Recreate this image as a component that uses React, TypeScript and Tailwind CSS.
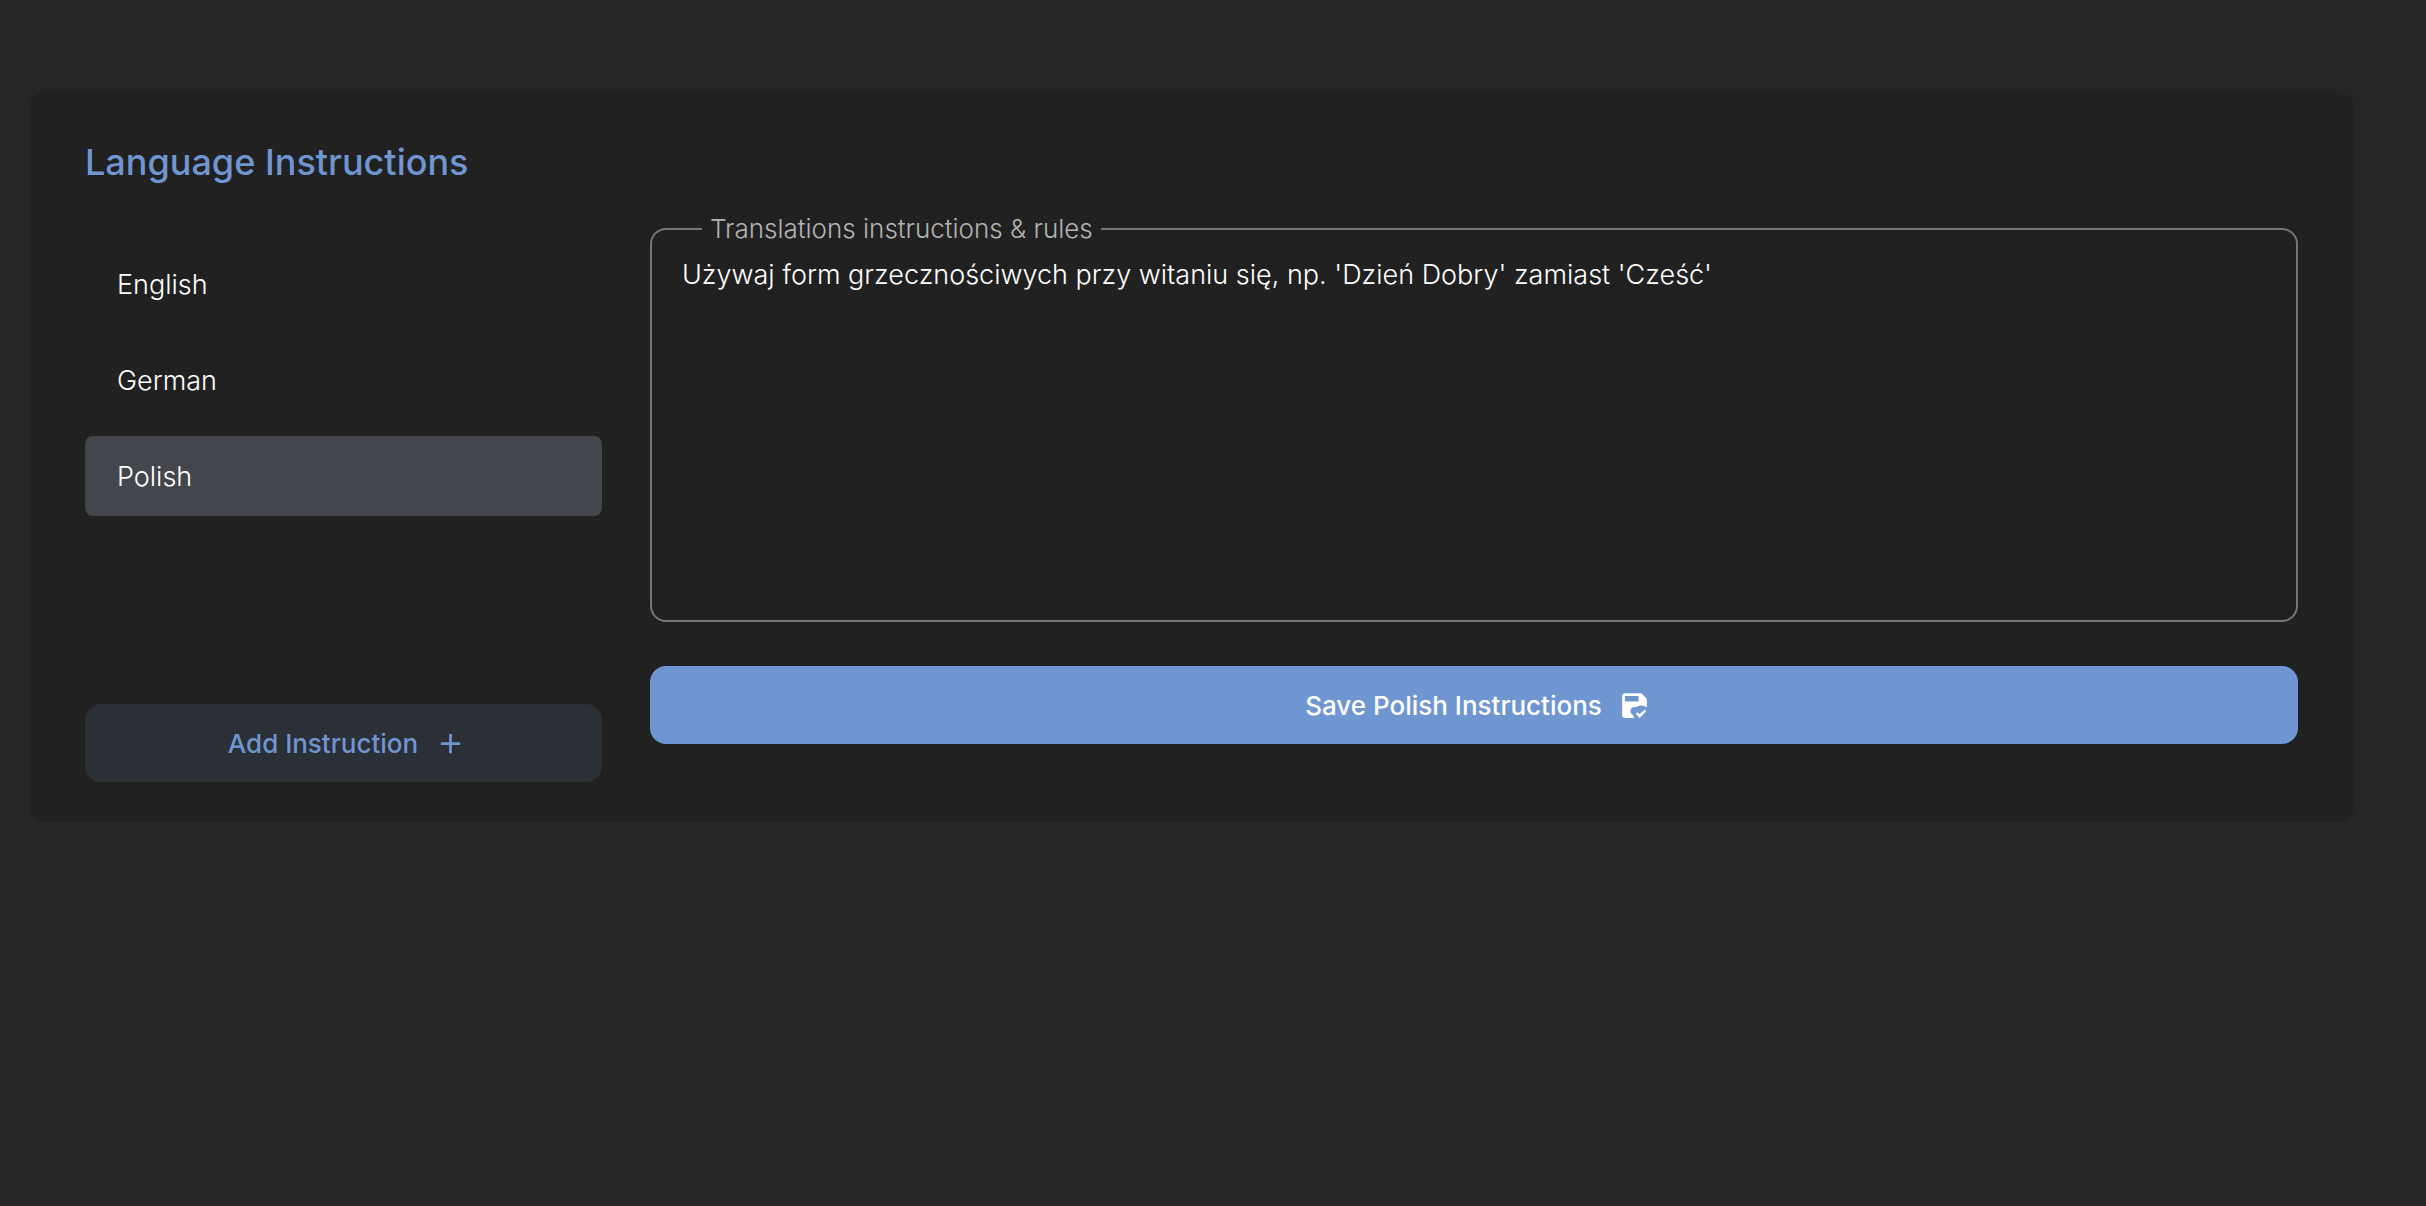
import React, { useState } from 'react';

const languages = ['English', 'German', 'Polish'];

const defaultInstructions: Record<string, string> = {
  English: '',
  German: '',
  Polish: "Używaj form grzecznościwych przy witaniu się, np. 'Dzień Dobry' zamiast 'Cześć'",
};

interface IconProps {
  className?: string;
}

const PlusIcon: React.FC<IconProps> = ({ className = '' }) => (
  <svg viewBox="0 0 24 24" fill="currentColor" aria-hidden="true" className={className}>
    <path d="M19 13h-6v6h-2v-6H5v-2h6V5h2v6h6z" />
  </svg>
);

const SaveCheckIcon: React.FC<IconProps> = ({ className = '' }) => (
  <svg viewBox="0 0 24 24" fill="currentColor" aria-hidden="true" className={className}>
    <path d="M17 3H5C3.89 3 3 3.9 3 5V19C3 20.1 3.89 21 5 21H11.81C11.42 20.34 11.17 19.6 11.07 18.84C9.5 18.31 8.66 16.6 9.2 15.03C9.61 13.83 10.73 13 12 13C12.44 13 12.88 13.1 13.28 13.29C15.57 11.5 18.83 11.59 21 13.54V7L17 3M15 9H5V5H15V9M15.75 21L13 18L14.16 16.84L15.75 18.43L19.34 14.84L20.5 16.25L15.75 21" />
  </svg>
);

interface LanguageListProps {
  selected: string;
  onSelect: (language: string) => void;
}

const LanguageList: React.FC<LanguageListProps> = ({ selected, onSelect }) => (
  <ul className="flex flex-col gap-4">
    {languages.map((language) => (
      <li key={language}>
        <button
          type="button"
          onClick={() => onSelect(language)}
          className={`flex h-20 w-full items-center rounded-lg px-8 pt-0.5 text-[27px] font-light text-white ${
            language === selected ? 'bg-[#44464e]' : ''
          }`}
        >
          {language}
        </button>
      </li>
    ))}
  </ul>
);

const App: React.FC = () => {
  const [selected, setSelected] = useState('Polish');
  const [instructions, setInstructions] = useState(defaultInstructions);

  return (
    <main className="min-h-screen bg-[#262626] pt-[92px] pr-[72px] pb-12 pl-[29px] font-['Inter',sans-serif]">
      <section className="rounded-2xl bg-[#212121] px-14 py-10">
        <h2 className="text-[36px] leading-[60px] font-medium text-[#6f96d1]">Language Instructions</h2>

        <div className="mt-4 flex gap-12">
          <div className="flex w-[517px] shrink-0 flex-col justify-between pt-9">
            <LanguageList selected={selected} onSelect={setSelected} />
            <button
              type="button"
              className="flex h-[78px] items-center justify-center gap-4 rounded-2xl bg-[#2b2f36] text-[26px] font-medium text-[#6f96d1]"
            >
              Add Instruction
              <PlusIcon className="-mr-2 size-[33px]" />
            </button>
          </div>

          <div className="flex min-w-0 grow flex-col gap-11 pb-[38px]">
            <fieldset className="h-[414px] rounded-2xl border-2 border-[#777777] px-[30px]">
              <legend className="ml-5 px-2 text-[26px] leading-[42px] font-light text-[#b3b3b3]">
                <label htmlFor="instructions">Translations instructions &amp; rules</label>
              </legend>
              <textarea
                id="instructions"
                value={instructions[selected]}
                onChange={(e) => setInstructions({ ...instructions, [selected]: e.target.value })}
                className="block h-[340px] w-full resize-none bg-transparent pt-1 text-[27px] leading-[42px] font-light text-white outline-none"
              />
            </fieldset>
            <button
              type="button"
              className="flex h-[78px] items-center justify-center gap-4 rounded-2xl bg-[#6f96d1] text-[26px] font-medium text-white"
            >
              Save {selected} Instructions
              <SaveCheckIcon className="-mr-2 size-[33px]" />
            </button>
          </div>
        </div>
      </section>
    </main>
  );
};

export default App;
